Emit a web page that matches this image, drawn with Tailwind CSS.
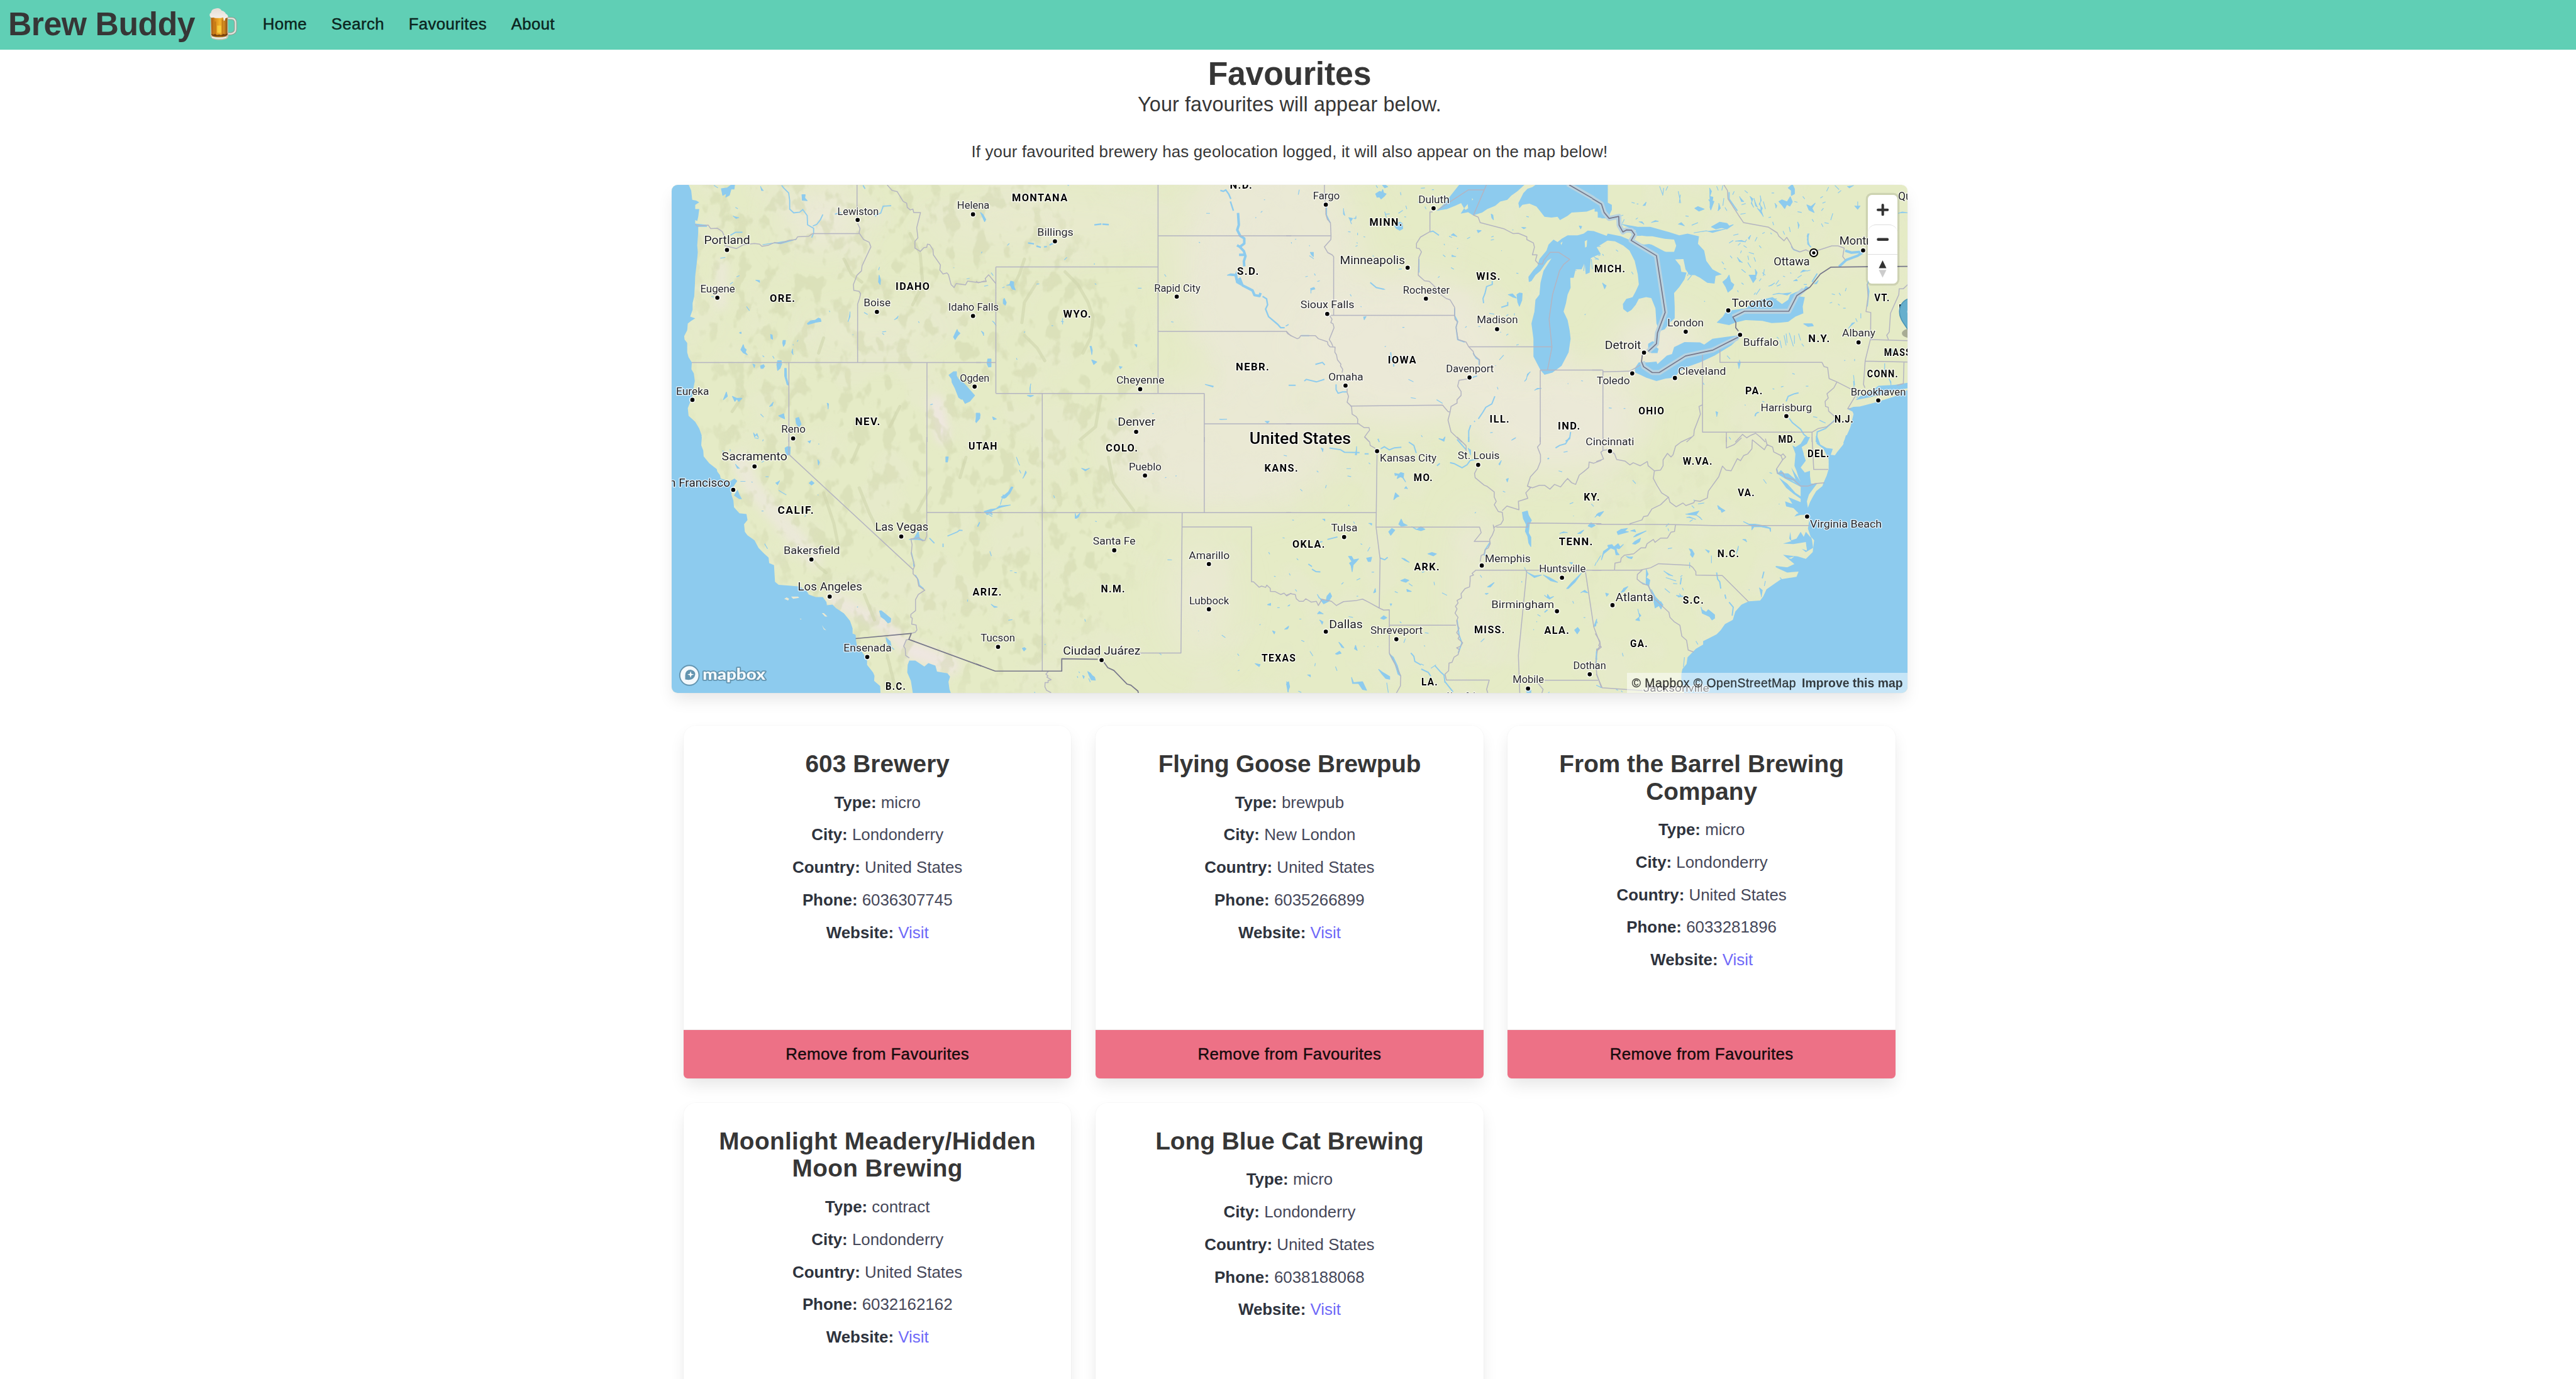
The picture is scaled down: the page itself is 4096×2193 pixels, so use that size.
<!DOCTYPE html>
<html lang="en" class="text-[25.864px]">
<head>
<meta charset="utf-8">
<title>Brew Buddy</title>
<script src="https://cdn.jsdelivr.net/npm/@tailwindcss/browser@4"></script>
</head>
<body class="h-[2193px] w-[4096px] overflow-hidden bg-white font-['Liberation_Sans',Arial,sans-serif] text-[1rem] leading-[1.5] text-[#363636]">
<header class="flex h-[3.0625rem] items-center bg-[#60cfb5] pb-[0.08rem]">
  <div class="flex w-[15.4rem] shrink-0 items-center pl-[0.5rem]">
    <span class="w-[12.36rem] shrink-0 whitespace-nowrap text-[2rem] leading-none font-bold tracking-[-0.45px]">Brew Buddy</span>
    <svg class="h-[1.95rem] w-[1.7rem] shrink-0" viewBox="0 0 54 62">
      <defs><linearGradient id="beer" x1="0" x2="1"><stop offset="0" stop-color="#a65c12"/><stop offset=".25" stop-color="#d98a1b"/><stop offset=".55" stop-color="#f4b32b"/><stop offset=".8" stop-color="#d08a22"/><stop offset="1" stop-color="#8f4f12"/></linearGradient>
      <linearGradient id="foam" x1="0" y1="0" x2="0" y2="1"><stop offset="0" stop-color="#e6ddd6"/><stop offset="1" stop-color="#f7f3ef"/></linearGradient></defs>
      <path d="M36 20h7q8 0 8 9v12q0 8-9 9h-6" fill="none" stroke="#8f9a8c" stroke-width="5.5"/>
      <path d="M36 20h7q8 0 8 9v12q0 8-9 9h-6" fill="none" stroke="#dfe3dc" stroke-width="3"/>
      <path d="M2 14h34l1 40q0 8-17 8T2 54z" fill="#c9c4ae"/>
      <path d="M3 14h32v38q-2 5-16 5T4 52z" fill="url(#beer)"/>
      <path d="M10 26h3v28h-3zM24 22h3v33h-3z" fill="#b06a12" opacity=".55"/>
      <path d="M15 34h8v14h-8z" fill="#ffe14a" opacity=".6"/>
      <path d="M4 52q3 4 15 4t16-4v-3q-3 4-8 1-4 4-8 1-4 3-8-1-4 3-7 0z" fill="#5e2c08" opacity=".75"/>
      <path d="M5 57q14 4 28 0" stroke="#fff" stroke-width="1.5" fill="none"/>
      <path d="M1 16Q-1 11 3 9 4 2 11 1q9-3 13 4 6 1 8 6 5 2 4 7l-5 2-1 4-2 1-1-7q-10 3-20 0-4 2-6-2z" fill="url(#foam)"/>
    </svg>
  </div>
  <nav class="flex items-center tracking-[0.35px] text-[#0b2520] [-webkit-text-stroke:0.45px_#0b2520]">
    <a class="px-3 text-[1rem]">Home</a><a class="px-3 text-[1rem]">Search</a><a class="px-3 text-[1rem]">Favourites</a><a class="px-3 text-[1rem]">About</a>
  </nav>
</header>
<main class="flex flex-col items-center pl-[0.1875rem] text-center">
  <h1 class="mt-[0.33rem] text-[2rem] leading-[1.125] font-bold tracking-[-0.2px]">Favourites</h1>
  <p class="text-[1.25rem] leading-[1.25] tracking-[0.12px]">Your favourites will appear below.</p>
  <p class="mt-[1.37rem] leading-[1.5] tracking-[0.18px]">If your favourited brewery has geolocation logged, it will also appear on the map below!</p>

  <section class="relative mt-[1.3rem] h-[31.25rem] w-[76rem] rounded-[0.375rem] shadow-[0_0.5rem_1rem_-0.125rem_rgba(10,10,10,0.1),0_0_0_1px_rgba(10,10,10,0.02)]">
    <div class="h-full w-full overflow-hidden rounded-[0.375rem]">
    <svg class="block h-full w-full [&_path]:[vector-effect:non-scaling-stroke]" viewBox="1321 364 2432 1000" preserveAspectRatio="none">
      <defs>
        <filter id="soft" x="-30%" y="-30%" width="160%" height="160%"><feGaussianBlur stdDeviation="32"/></filter>
        <filter id="soft2" x="-30%" y="-30%" width="160%" height="160%"><feGaussianBlur stdDeviation="9"/></filter>
        <filter id="relief" x="0" y="0" width="100%" height="100%" color-interpolation-filters="sRGB">
          <feTurbulence type="fractalNoise" baseFrequency=".034 .024" numOctaves="3" seed="8"/>
          <feColorMatrix values="0 0 0 0 .80  0 0 0 0 .825  0 0 0 0 .66  9 0 0 0 -4.9"/>
        </filter>
        <filter id="haze" x="0" y="0" width="100%" height="100%" color-interpolation-filters="sRGB">
          <feTurbulence type="fractalNoise" baseFrequency=".009" numOctaves="3" seed="3"/>
          <feColorMatrix values="0 0 0 0 .922  0 0 0 0 .914  0 0 0 0 .85  0 5 0 0 -2.4"/>
        </filter>
        <mask id="west"><g filter="url(#soft)" fill="#fff"><path d="M1350 340H2020L2140 480 2250 650 2260 900 2230 1100 2080 1350H1700L1500 1100 1400 900z" opacity=".8"/><path d="M3050 1060L3180 960 3400 830 3460 860 3260 1060 3120 1140z" opacity=".25"/></g></mask>
      </defs>
      <rect x="1321" y="364" width="2432" height="1000" fill="#e5ebc6"/>
      <g filter="url(#soft)" fill="#ebe9d7">
        <ellipse cx="2500" cy="530" rx="180" ry="240" opacity=".85"/><ellipse cx="2760" cy="690" rx="210" ry="150"/><ellipse cx="2400" cy="880" rx="230" ry="130" opacity=".8"/>
        <ellipse cx="3060" cy="820" rx="170" ry="110"/><ellipse cx="3260" cy="680" rx="90" ry="60"/><ellipse cx="2060" cy="440" rx="260" ry="60" opacity=".4"/>
        <ellipse cx="2360" cy="1180" rx="70" ry="120" opacity=".6"/><ellipse cx="2895" cy="1150" rx="40" ry="160" opacity=".6"/><ellipse cx="1620" cy="430" rx="80" ry="60"/><ellipse cx="1720" cy="650" rx="140" ry="35" opacity=".6"/>
      </g>
      <g filter="url(#soft2)" fill="none" stroke="#ebe8d9" stroke-linecap="round">
        <path d="M1455 905L1480 960 1540 1030 1600 1100" stroke-width="26"/><path d="M1420 520L1418 600" stroke-width="16"/><path d="M1840 790L1855 860" stroke="#efe6e2" stroke-width="22"/>
        <path d="M1640 1180L1740 1230 1800 1290" stroke="#ede6de" stroke-width="22"/><path d="M1800 1280L1870 1310" stroke="#efe6e2" stroke-width="26"/>
      </g>
      <rect x="1321" y="364" width="2432" height="1000" filter="url(#haze)" opacity=".22"/>
      <g mask="url(#west)"><rect x="1321" y="364" width="2432" height="1000" filter="url(#relief)" opacity=".5"/></g>
      <g fill="none" stroke="#cfd5ad" stroke-width="5" stroke-linecap="round" stroke-linejoin="round" opacity=".6">
        <path d="M2095 535l25 25 20 35 10 30-5 40-15 30M2015 660l25 25 15 25M1990 570l15-30 10-30M2040 555l-25 40-5 40M1620 970l20 60 10 50M1585 1085l25 30 15 12M1690 960l20 50 15 30M1700 1170l20 50M1745 1290l15 60M2180 900l10 50 40 55M2165 780l-10 60-30 25M1460 780l-20 30M1620 665l-10 30M1790 460l20 40 5 60-20 40M1660 510l15 30 20 15M1900 900l-12 40M1830 960l-25 45M1690 875l-15 35M1770 800l-20 40"/>
      </g>

      <!-- Pacific Northwest -->
      <g transform="translate(1310 350) scale(.395408 .333333)">
        <path fill="#8dcbee" d="M20 30L112 40 125 75 130 130 150 135 165 145 145 160 145 185 165 185 160 230 155 255 145 250V270L200 278 205 290 160 290 160 320 155 400 158 440 152 510 145 580 143 640 140 700 132 740 132 780 120 820 145 830 125 845 108 860 105 900 90 935 92 955 105 975 105 1030 112 1060 128 1090 126 1130 138 1155 143 1200 137 1235 133 1265 130 1300 118 1330 108 1360 112 1405 145 1440 165 1480 177 1520 175 1565H20z"/>
        <path fill="#8dcbee" stroke="#8dcbee" stroke-width="1.2" stroke-linejoin="round" d="M238 45l20 15M275 65l30-5 20-18 16 0-3 25-15 0-8 35-18 12 5-25-20 15zM470 50l5 25 10 0M676 100l16 0-2 20 12 15-24-2zM345 175l12 8M333 225l15 15 15-5M703 860l15-15 25-5 15-12 10 5 3 15-25 5-25 8-15 5zM520 925l8 3 2 25-8-5zM582 960l12 0-2 20-8 15-4-20zM372 1015l12-30 5 20 10 10-5 15 10 15-20-12zM555 1080l18 0 2 20-8 25-12 12-4-35zM590 1125l8 0 2 55 10 45-8-5-12-50zM470 1110l15-7 5 10-8 12-10 0zM432 1100l10 5-3 15zM1060 575l7 30-2 25-8-15zM1057 545l5-18M1430 940l8-20 10-24 4 12 10 10-12 15-12 22zM1408 1165l22-20 15 0 0 25 10 20 15 10 20 25 45 60-25 35-22 12-12-25-8 0-12-10-18-55-15-35-2-20zM1075 910l20-3M1075 918l10 8M985 795l18 12M915 790l0 30-10 30M1135 838l15-8 5-15M1430 530l4 2M1495 597l15-3M285 1310l15-45 5 25zM330 1290l12 30 10-15 10 15 15-18-25 0zM515 1350l18-25-5 20zM560 1405l25-12 5 30-15-8zM645 1420l15-5 12 40-12 15-12-20zM470 1395l15 18M800 1330l8 5-2 30M1540 1440l8-50 15 10-8 25zM435 1505l5 25 12-20 8 25M400 760l15 25M445 605l20 2 0 12M350 585l15-7M318 628l15-12M225 700l12 4M365 915l8-4 0 9zM480 1050l8 8M630 1010l-5 20 8 15M530 1052l8 15M630 985l5 2M652 968l5-10M812 785l3 8M928 925l3 3M1315 1340l12-4M1255 848l5 8M270 475l25-5M480 395l60-10 30 5 80-28"/>
        <path fill="none" stroke="#8dcbee" stroke-width="1.8" d="M575 45l10 15 25 30 5 45 0 50 20 22 30-4 15-15 22 35 2 55 30 20 0 30-10 25M730 285l20-10 18-28 12-30M1040 228l8-10 20-10 12-40 40-3M840 215l30-10M980 45l10 20M320 340l25-18 35 0"/>
        <path fill="none" stroke="#b4b4c1" stroke-width="1.5" stroke-linejoin="round" d="M950 40V240M953 270L965 300 960 325 983 365 1010 380 1019 408 975 520 972 550 950 575 932 630 934 665 960 670 968 685 962 715 953 745V1092M728 330H965M145 275L155 285 210 280 222 300 255 298 280 318 290 345M290 400L350 418 385 395 440 388 465 392 477 405 510 398 540 382 565 388 610 370 645 365 655 348 710 345 728 330M128 1091H1568M611 1092V1560M1298 1092V1560M1100 42L1125 75 1150 82 1180 140 1197 150 1200 175 1215 190 1228 185 1232 205 1266 205 1247 295 1253 355 1238 375 1238 415 1265 435 1283 412 1297 410 1300 392 1312 395 1328 425 1330 455 1365 515 1362 545 1378 568 1397 562 1405 572 1418 630 1433 648 1443 625 1490 632 1500 610 1550 618 1594 612"/>
      </g>

      <!-- California and Arizona -->
      <g transform="translate(1310 860) scale(.395408 .333333)">
        <path fill="#8dcbee" d="M177 0L175 50 185 80 187 115 215 155 252 190 255 205 268 225 272 245 300 255 325 262 330 300 325 340 335 375 338 415 365 450 400 455 405 490 388 515 392 560 405 580 440 610 460 655 485 685 510 712 513 745 537 757 542 855 560 873 620 878 665 883 700 910 710 930 745 945 780 945 798 975 800 993 828 990 845 1010 885 1042 915 1085 928 1130 928 1160 943 1168 945 1200 950 1235 975 1270 1000 1310 1000 1345 1030 1390 1037 1410 1035 1440 1065 1470 1067 1515H20V0zM1210 1320L1240 1320 1285 1355 1305 1335 1340 1350 1348 1385 1400 1395 1413 1415 1405 1445 1410 1490 1418 1515H1228L1218 1440 1200 1390 1202 1345z"/>
        <path fill="#ebe9d2" d="M588 955l12-8 12 8-5 10zM622 942l35 0 5 8-30 5zM775 1040l10 0 18 20-12 0zM775 1110l10 18 12 14-12-6zM665 1072l10 2-6 4z"/>
        <path fill="#8dcbee" stroke="#8dcbee" stroke-width="1.2" stroke-linejoin="round" d="M325 258l15-10 12 12-12 20-10 20zM340 345l15-30 8 25 12 25-10 0zM592 65l12-8 14 2-2 45-14 2-8-20zM1062 1028l8-2 20 18 28 28-2 20-12 6-15-20-20-18zM1095 1185l20 22 5 30-12-5-10-25zM712 272l12-12 12 12-12 12zM755 135l8 15-5 15zM1392 118l12 0-4 30-8 0zM545 270l10 12 10-25M560 315l20 15 18 12M345 160l10 25 12 0M370 262l25 0M425 265l5 3M495 235l15 0M475 437l10 0M490 630l15 30M1210 605l25-8 20-40 5 40 25 15-40-8zM1500 960l0 12M1120 1240l15 15M280 80l10 10M318 72l2 12M475 150l12-8M705 25l10 10 5-15M757 42l5 0M950 1005l5-3M690 470l5-8M755 340l2 5M440 5l20 5M480 25l4-10"/>
        <path fill="none" stroke="#8dcbee" stroke-width="1.8" d="M1400 585l50-25 10-10 15 2M1310 597l25 30M1378 630l0 20M1220 680l12 60 0 25M1550 530l10-25M1240 815l15 30 5 30 22 22"/>
        <path fill="none" stroke="#b4b4c1" stroke-width="1.5" stroke-linejoin="round" d="M611 0V103L1229 783M1297 0V585L1288 610 1275 613 1260 595 1218 602 1224 635 1220 690 1237 760 1229 783V808L1250 835 1257 880 1287 905 1255 930 1241 960V1025L1218 1047 1218 1065 1225 1070 1222 1105 1244 1110 1248 1140 1240 1153 1218 1160M1297 446H1568M1208 1195L1195 1198 1182 1235 1190 1250 1192 1290 1210 1305"/>
        <path fill="none" stroke="#77778a" stroke-width="1.7" stroke-linejoin="round" d="M943 1190L1220 1160 1208 1195 1568 1352"/>
      </g>

      <!-- Northern Rockies and Dakotas -->
      <g transform="translate(1920 350) scale(.395408 .333333)">
        <path fill="#8dcbee" stroke="#8dcbee" stroke-width="1.2" stroke-linejoin="round" d="M152 635l15-5 5-20 15 5 0 25 8 22-15-5-10-22zM135 720l5-8 10 25-5 15-10-10zM22 205l12 12 14 30-6 12zM58 1070l16 0 0 45-12 2-8-20zM0 1390l18 0 0 30-18 25zM82 1412l18 12-14 4zM565 995l8 0 5 25-3 25M575 1075l25 12-15 15zM272 1215l-5 30 3 30M255 1285l30 0-15 8zM1250 575l15-8 25 2 5-15 5 40 10 15 12 10-5 15-22-15-8-40zM1140 1220l40 10-2 5zM1438 1438l20 0-8 10zM1210 1425l8 2 30-2M712 1112l5 15 10-12M430 830l0 35M422 848l14 2M788 985l12 0-2 15M805 652l18 0M937 570l8 14M1108 380l6 4M1145 210l18 0M1416 205l8-8M1390 238l3-5M75 560l10 18M40 640l20-5M25 905l12 10 0 18M80 845l10 10 10 20M238 915l5-8M200 1065l4 10M375 872l8 2M588 505l0 8M438 485l14-15M590 625l8 5M155 400l10-12M25 445l5-8M300 628l14-2M130 650l12-6M1432 130l5 0M970 850l12 2M876 1392l8 0M455 42l6 5M1540 875l14-10M693 1420l6 10"/>
        <path fill="none" stroke="#8dcbee" stroke-width="4" stroke-linejoin="round" d="M1303 208l4 70-8 30 15 35 20 15 0 30-22 20 20 25 8 30-8 30 2 30M1308 455h28M1298 398l14 10M1310 590l15 45 50 30 10 28 25 5 5-18"/>
        <path fill="none" stroke="#8dcbee" stroke-width="2.4" d="M1215 75l15 5 12-8 15 25 10 28M1265 140l15 55M588 278l35-5M628 274l32 3M258 385l30 5M300 403l22 8M338 408l14-2M365 397l18-10M1425 700l20 15 5 35-10 25 15 45 45 45 15 20 20 0"/>
        <path fill="none" stroke="#b4b4c1" stroke-width="1.5" stroke-linejoin="round" d="M0 610L10 620 40 610 50 612 45 595 62 573 98 625M98 526H903M98 526V1272M98 1273H1135M905 42V1272M905 343H1568M905 907H1543L1550 920 1568 932M0 1091H100M329 1272V1560M1135 1272V1560M1135 1452H1568"/>
      </g>

      <!-- Southwest and Texas -->
      <g transform="translate(1920 860) scale(.395408 .333333)">
        <path fill="#8dcbee" stroke="#8dcbee" stroke-width="1.2" stroke-linejoin="round" d="M40 440l30-12 30-5 15-15 55-6-45 12-25 10-25 15 5 20-15-10-10 10zM125 355l20-15 15-15 15-30 8 2-15 35-20 25-10 5zM525 185l20 8 18-8-20 15zM493 480l0-28 4 20 20-22-8 22-10 8zM75 988l12 10 18 6-15 2zM230 1248l10-5 8 8-10 12zM555 1385l12 8 10 15 12 10 4 18-20-2-10-25zM560 1425l8 22M530 1408l8 5-3 12zM503 1412l3 10M510 1385l6 8M1388 1338l25 5-5 12zM1450 990l15-8 0 12zM1475 1145l12 5-4 12zM1535 1135l20-18-5 15zM1545 1445l8 10 0 50-5-40zM385 345l6 15M952 725l22 1M540 1075l4 15M592 497l8 3M200 118l12 40 5 10M215 195l8 20M245 200l5 10-18 35M1525 595l10 2M1455 680l6 12M1482 822l8 2M1550 1000l12-10M1498 1008l12 0M1415 1105l-5 5M1222 1170l18 14M1105 1143l3 3M1300 1280l8 12M1302 1380l8-4M340 1225l6 0M160 1082l20-4M168 790l12 0M190 800l12 2M68 675l8 28M8 525l10-22M60 455l20 15M910 1275l12 12M120 400l15-60M940 242l6-4M992 231l5-2M1530 108l16 4M290 1505l3 8"/>
        <path fill="none" stroke="#b4b4c1" stroke-width="1.5" stroke-linejoin="round" d="M329 0V1382M0 447H1568M1135 0V446M1025 446L1019 1275H640M1025 531H1370V855L1380 855 1408 887 1420 880 1440 888 1446 875 1463 893 1464 912 1488 913 1515 930 1532 922 1545 938 1568 922M360 1382L347 1400 357 1410 352 1418 373 1433 358 1438 358 1450 343 1450 342 1475 350 1495 373 1510M607 1300V1285"/>
        <path fill="none" stroke="#77778a" stroke-width="1.7" stroke-linejoin="round" d="M0 1340L95 1382H426V1309L605 1312M636 1330L655 1362 685 1378 750 1458 770 1465 805 1500 807 1512"/>
      </g>

      <!-- Upper Midwest -->
      <g transform="translate(2530 350) scale(.395408 .333333)">
        <path fill="#8dcbee" d="M748 195L790 150 815 110 860 42H1185L1150 80 1120 105 1100 130 1065 140 1040 165 1000 185 975 205 930 222 905 203 868 212 885 180 870 150 840 165 800 185zM1240 42H1600V240L1550 235 1550 185 1535 182 1495 200 1420 205 1400 225 1362 250 1350 230 1320 235 1285 230 1265 200 1245 170 1210 152 1175 160 1160 180 1155 150 1180 90 1200 65 1225 55zM1500 312L1530 315 1600 345V370L1545 410 1565 450 1530 465 1515 475 1510 560 1490 570 1485 500 1470 540 1440 540 1430 590 1413 590 1415 650 1400 690 1392 740 1380 790 1400 840 1410 900 1415 950 1405 1030 1370 1110 1325 1150 1285 1163 1265 1135 1230 1055 1230 950 1220 860 1235 790 1240 720 1260 690 1265 620 1280 550 1320 475 1300 490 1265 550 1240 575 1220 610 1207 615 1205 585 1230 545 1250 520 1260 480 1295 430 1305 395 1330 365 1350 380 1370 360 1400 340 1450 340 1480 330z"/>
        <path fill="#e5ebc6" d="M885 180l18-25 2 25-12 10zM1485 375l12-8-2 40-8 5zM1365 385l10-8-6 20zM925 120l5 8-6 6z"/>
        <path fill="#8dcbee" stroke="#8dcbee" stroke-width="1.2" stroke-linejoin="round" d="M445 95l20-15 10 5 5-15 5 20 12 5-10 15-15 15-8-12-12 2zM540 285l12-18 15-5 10 8 3 30-15 10-18-12zM1148 690l12-10 14 3-2 40-12 35-8-25zM1105 690l20-5 20 25-15-5zM1020 215l8 5 3 28-8-12zM950 310l20 2-15 12zM1195 228l12 4M1172 293l20 2-10 6zM1458 285l12 2-5 14zM480 45l15 0 10 8-15 6zM447 45l8 15M65 70l-5 30M310 235l20 5-10 18 5 15M285 180l0 35 8 8M335 240l15-3M348 225l-5 20M308 318l12 2M355 325l0 14M385 348l8 2M345 405l10-5M350 382l5 5M490 200l8 35M495 215l20-2M558 210l22-18M595 165l5 20M655 142l8 4M568 85l3 18M670 62l20-2M725 70l10 0M690 170l6 15M588 230l8 2M120 440l15 0 0 25-10-12zM115 460l22 18M95 585l12-4M140 565l5 12M155 612l12-4M120 655l18-8 5 10-20 5 0 20M318 688l6 12M430 460l6 4M480 655l12 5M820 340l12-10 18 18M810 345l15 8M785 390l3 8M900 360l15-10M1020 350l12-5M1018 368l16-4M780 455l12 12M825 455l0 10 20 0M820 530l14 10M755 590l8-8M1070 430l3 0M850 420l5-5M1145 563l10 2M1125 310l5-4M1095 930l10-8M1065 912l4 0M1145 988l12-4M890 885l8-8M1040 1108l4 2M1010 800l25 5M1095 815l10-8M1135 800l0 12M955 878l12 0M620 1298l25 5M608 1190l25 15M748 1310l30 22M578 883l10 0M490 998l6-4M385 820l3 18 10-20M370 760l5 2M115 398l2 6M45 365l4-4M25 380l2 8M0 875l12-8M1485 810l4-6M1235 1255l15-12 20 0M1050 1235l4 14M1215 1145l-15 15-5 30-10 12M1060 1075l22-28M1468 1198l8 2M1400 1215l4 0M1530 465l25 20M1535 480l18-3M1518 480l5 60M1505 480l-5 80M1480 550l5-50M1440 545l4 3M1455 530l15 2M760 1540l20 5 10-15-5 25zM458 1540l5 20M1015 1505l12-2M672 1520l5 10M1125 1545l18-12M560 540l15-2"/>
        <path fill="none" stroke="#8dcbee" stroke-width="2" d="M418 618l30 30 38 10M1025 610l0 20-28 12-8 40-10 30 3 28M1070 765l32-12 0-20M1038 1290l-15 45-30 20-15 30-22 38M935 1435l4 6M918 1460l-10 35 0 65M75 932h40M90 1200l10-10 50 15 40-15M145 1102l35-12 12 15M12 1225h35M248 1220l0 30 10 22 22-8 20 0M715 320l15-5 30 25M910 1185l40-15M520 1030l2 50M535 1100l0 15M1415 1500l-5 40-20 15M200 160l0 60 18 45M660 480l0 80M838 770l0 45 15 35-8 30 8 75 35 15M930 1035l15 30 15 10 0 30"/>
        <path fill="none" stroke="#b4b4c1" stroke-width="1.5" stroke-linejoin="round" d="M190 42V100L197 170 197 215 205 245 220 265 223 345 222 365 190 408 207 442 228 455 236 465V810M0 343H222M222 812H838M215 812L228 835 222 855 233 862 238 885 214 955 225 975 232 995M0 905L20 930 55 950 65 945 72 932H145L160 950 205 968 208 985 218 998 243 1000 242 1030 250 1045 255 1075 272 1100 270 1110 281 1130 278 1150M303 1245V1268L310 1290 303 1325 325 1350 328 1395 348 1410 356 1425 355 1448 388 1475 412 1475 415 1490 405 1505 390 1530 415 1560M318 1348L778 1342 805 1380 815 1383M0 1452H365M728 202H715V318L668 350 648 388V415L662 418 673 438 660 470 657 575 688 608 712 612 735 638 770 690 795 712 815 720 838 765V812L840 835 852 850 845 885 855 955 895 970 908 998 930 1025 935 1048 962 1075V1105M912 1185L860 1195 853 1230 870 1262V1285L850 1310V1330L820 1350 815 1385 805 1430 820 1500 873 1560M908 998H1322M1264 1135V1560M1264 1135H1568M755 188L905 72H985L996 42M985 72L932 220 955 232 965 265 1085 302 1130 330 1155 328 1197 348V365L1230 385 1235 410 1225 455 1248 455 1240 488 1255 508 1275 510 1282 485 1313 440H1355L1411 482 1380 512 1360 548 1325 690 1308 835 1322 1000 1300 1135"/>
        <path fill="none" stroke="#b9d3e0" stroke-width="8" d="M1400 36L1568 150"/>
        <path fill="none" stroke="#77778a" stroke-width="1.7" d="M1408 42L1568 152"/>
      </g>

      <!-- Mississippi basin and the South -->
      <g transform="translate(2530 860) scale(.395408 .333333)">
        <path fill="#8dcbee" stroke="#8dcbee" stroke-width="1.2" stroke-linejoin="round" d="M540 215l20 5 10-10 15 5-3 25 12 25-15-25-12-5-15 10 5-20-15 2zM535 370l8-40 18 20-12 5zM588 305l8-12 8 14M560 515l12-30 10 25 20 12-30 5zM625 530l25 15 20-15 20 15-20 8-25-8zM510 560l15-20 15 10-20 30zM310 705l15 0 10 20 25-5-15 20-12 15-5 40-5-35-8-15 12-10zM400 715l25-5-5 25-12 0zM705 690l20-8 22 8-15 12zM570 848l20-10 20 8-15 12zM610 865l18 15M575 715l15 5 22 20-20-10zM600 900l22 12-20 0zM775 920l25 15M735 855l3 20M1002 885l32-25-18 25zM990 925l15-2-8 6zM1175 445l25-8 5 25 15 30-10 20-5 55 12 25 0 55-10-20-5-40-12-30 5-40-15-35zM1360 570l20-10 20 5M1450 570l30-20-15 20zM1502 525l15-18 20 15-18 12zM1535 475l18-25 15 0M1545 740l20-40M1535 760l8-20M1285 935l15 15 0-20 12 20 18-8-20 15zM1410 740l10 10 5-10M1395 895l25-35 48-55-30 50-35 40zM1200 800l35 30 35-15-35 5zM1280 815l30 15 40 28-35-10zM1185 770l12 30M1465 920l20-15 15 15-20-5M1425 968l5 15M1250 1048l15 10M1435 1140l15-15 10 15-12 22zM1480 1065l8 2M1530 1120l15-45-5 40zM1545 1250l-5 60 3 30 0-50zM1245 1088l3 5M1230 1135l2 5M968 1210l18-20M965 815l8 15M1172 850l0 10M1195 1495l22 0 0 18-18 0zM513 1280l20 20 20 50 15 60-12-10-15-60-15-30zM460 1372l20 18 35 25 0 15-20-5-18-25zM325 1420l10 30 45-5 20 50-20-5-20-35-30 0zM262 1212l10 10 15 22-10-2zM340 1250l5-20 8 30zM245 1280l20-15 8 12-20 6zM118 1265l15 28M105 1405l15 0 0 12M245 1355l8 25M145 1335l-3 18M0 1460l12-15 5 30-10 30M155 1045l10-15 20 15M165 1080l18 12-5 15M310 1060l22 5M470 1070l15-15 15 12-15 10zM350 940l8 0M155 930l8 20 35 20 5-30 15-20 8 20-15 30-25 15-15-25zM435 920l8-25 2 20zM275 870l10-12M350 845l18-10M180 485l12 0 0 12M410 510l15 0 0 12M335 500l5 12M405 675l12-25M370 630l8 5M310 400l3 8M70 308l10 12M195 302l5-18M152 200l8 8M300 187l22 0M305 230l18 5M172 65l12 5-3 18M350 55l0 50-8 0M410 152l8 8M1058 160l12-20-8 25zM1095 250l10-5-5 20zM1078 320l12 6M938 450l6-6M515 985l10 0-5 12M540 912l15 8M585 1215l8-25M685 1232l6 3M455 1235l2 5M720 1365l25-20M690 1155l18 4M1410 395l18-8M1518 395l12 15M1428 465l3 2M1355 200l18 6M1380 90l20-5M760 10l20 10M455 12l8 18M1120 20l20-12M905 65l12 40 0-30M45 900l8 12M52 718l8 8M15 805l5 12M30 490l8 2M10 995l8 0M65 1075l10 0M0 1135l12-12M385 1235l6 0M75 1200l15 8M500 1450l8 60M670 1340l15 8M675 800l12-5M425 798l12 0M60 1500l15 8M1310 1505l-8 8M565 1090l8 8"/>
        <path fill="none" stroke="#8dcbee" stroke-width="2" d="M470 70l18-12 25 18 25-12 35-3M610 30l25 20 12 45M815 152l20 5 40 25 25-18 15-25 40-10M908 0l0 28M215 65l55 10 20 15 75 2M110 750l18 15M128 780l20 15 22 2M205 605l50-15M155 625l25-8M468 715l22 10 15-15M620 1275l15 20 5 30 30 20M672 1370l35 20 12 22M740 1350l30 40 15 15 5 45M790 1445l40 60M390 100h20M1285 1035l15-15M1340 65l20-15 30-10 18-35M1300 130l8-5M750 170l14-14M850 15l45 60M1015 620l-25 45-5 35M850 1080l10 90 14 45-18 60"/>
        <path fill="none" stroke="#b4b4c1" stroke-width="1.5" stroke-linejoin="round" d="M390 0L415 30 418 50 440 65 452 85 447 532 467 720 463 1010M850 0L895 52V85M950 185L937 215 940 240 985 285 1000 292 1035 325V355L1045 380 1035 400 1055 440 1075 445 1080 490 1068 515 1045 525 1035 535 1030 520 1035 550 1025 580 1012 605 1015 630 1005 655 990 665 985 690 970 700 965 735M945 785L925 805 932 815 915 822 915 850 912 885 890 895 880 910 870 925 872 950 850 965 855 980 842 1000 850 1015 840 1040 855 1065 848 1085 852 1110 860 1130 848 1155 862 1175 855 1190 878 1215 868 1235 848 1245 862 1255 855 1285 835 1300 825 1330 810 1335 808 1380 790 1400 797 1435H1010L997 1490 1003 1512M0 447H447M447 532H962L970 565 935 617H1012M1045 532H1202V508L1568 512M945 786H1568M0 935L20 925 45 930 50 955 65 970 85 970 97 955 125 975 150 970 160 995 178 958 225 970 250 995 285 972 350 965 380 957 410 975 463 1010 485 1022 513 1020V1275L545 1350 570 1410 568 1470 548 1512M513 1111H845M1197 790L1155 1290 1162 1512M1488 790L1530 1120 1560 1215 1555 1232 1568 1240 1548 1260 1540 1330 1545 1400 1568 1480M1285 1436H1552M1250 1450L1278 1490 1272 1512M1264 0V40L1250 60 1265 105 1265 145 1250 190 1215 235 1200 290 1215 300 1192 330 1202 362 1155 380 1158 430 1098 408 1075 435M1200 290L1225 300 1260 285 1285 285 1312 308 1335 280 1365 295 1385 265 1400 245 1420 270 1440 280 1458 225 1480 205 1505 180 1507 148 1530 155 1568 138"/>
      </g>

      <!-- Great Lakes and Northeast -->
      <g transform="translate(3140 350) scale(.408163 .333333)">
        <path fill="#8dcbee" d="M-8 42H40L55 70 42 95 45 140 75 160 75 190 65 215 65 240 25 240 5 200-8 200zM-8 325L45 355 55 330 120 345 170 372 230 395 260 390 330 435 370 425 385 400 375 365 330 360 270 345 220 345 180 340 190 310 110 270 200 290 260 290 350 320 400 340 440 330 495 345 490 390 520 430 530 490 560 540 605 570 575 580 570 625 535 620 500 590 475 575 450 575 430 540 425 510 420 480 380 482 405 520 410 555 435 560 425 600 400 645 375 680 378 760 378 830 350 860 330 895 305 905 290 860 285 770 265 710 240 705 205 715 190 750 170 780 150 795 130 775 128 745 145 715 175 705 190 670 205 630 200 570 185 490 160 430 130 400 90 375 45 370 30 385-8 360zM250 980L270 965 285 970 280 990 300 1010 295 1035 265 1035 250 1010zM205 1090L250 1090 290 1085 295 1100 340 1050 365 1040 375 1000 425 970 500 972 520 985 560 950 620 940 685 930 690 945 650 990 610 1020 570 1050 500 1090 430 1120 395 1150 380 1180 335 1185 290 1200 240 1180 215 1165 188 1150 185 1125zM580 855L610 820 625 790 665 780 720 770 760 730 850 705 895 745 925 720 935 690 1000 655 1010 640 1030 650 985 685 975 700 1005 705 995 760 998 800 960 820 925 850 890 855 845 858 800 845 720 840 670 855 640 870 620 865zM1510 1208L1440 1222 1360 1228 1320 1265 1270 1290 1250 1312 1300 1300 1400 1275 1430 1258 1510 1240zM1510 1250L1460 1270 1440 1290 1390 1310 1340 1328 1270 1350 1240 1352 1210 1365 1235 1380 1240 1395 1225 1470 1215 1500 1190 1565H1510z"/>
        <path fill="#e5ebc6" d="M195 345l25-3 50 10 60 10 40 10 15 30-10 35-40 0-40-35-45-12-35 0-20-20zM150 315l25 3 3 20-20-5z"/>
        <path fill="#8dcbee" stroke="#8dcbee" stroke-width="1.2" stroke-linejoin="round" d="M570 280l25-18 35 8 10 15 20-8-30 25-25-8-30 8-20-12zM610 615l20-20 10-20 8 40 15 15-8 25-20 20-10-30zM1000 862l40 0 6 12-25 4zM475 180l15-10 30 15-25 12zM1015 160l20 10 20-20-15 30 10 25-25-15zM880 140l15-10 25 12 15-30 10 30-12 25-15-10-10 25-12-20zM925 60l15 15 0 30 15-10 0-30-10-25zM305 50l15 50M325 60l-5 45M345 50l-10 25M395 80l12 70M405 100l-5 50M545 60l10 20-8 30 15 5-5 40-15-25 25 10-15 50-5-20M580 50l8 25M610 45l-5 30M590 150l8 30-12 15M615 120l-5 45M620 175l10 20M225 165l15-20-5 20M170 145l15 5M195 155l8 0M120 225l10-5M190 245l10-8M135 245l-10 25M205 260l15 0 10 15M265 265l20-12 15 5M395 275l15-10 15 20M460 280l30-15M470 325l60-12 30 10 65-22M430 225l15 3M665 80l-8 20M715 75l15 15M690 110l10 30 12 0M740 110l15 15-8 25 12 25M760 120l8 45 10 10M790 105l5 30-10 20 15 25-8 25M805 140l10 45M775 180l20 15 10 35M695 215l25-5M700 160l20-8M845 90l12 0M860 150l10 15-5 15M830 235l12-3M850 260l5 20M955 140l15 5M995 110l10 15M970 200l20 5M1080 120l12-10M1090 150l15-8M1085 195l10-15M1120 55l-10 25M1150 45l20 25M1210 50l10 10 20-15M1180 75l-15 15M1245 165l15 20 12-20M1260 140l0 40M1140 210l-10 40M1100 265l20 5M1085 270l8 20M1040 245l8 15M970 260l8 20-5 20M930 290l5 30M1015 345l10-15-8 35 10 30M900 315l8 20M840 325l6 8M745 340l-12 15 5 10M775 350l-10 25M725 365l-8 12M800 330l12-8M660 340l25-8M640 385l20-15M710 400l15 12M785 400l10 15M700 430l-5 15M670 375l30-5 20 10M695 385l-12 15M735 440l25 10M760 470l8 25M645 460l10 15M605 495l10 15M615 535l10 5M680 470l10 25 15 5M730 500l15 30M730 460l5 25M700 540l20 20M735 575l30 0 5 20-15 25M765 540l10 20-8 30M785 610l10-15M800 560l15 15M810 540l-5 40M830 640l15-5 15-15M790 655l-20 35M760 690l8-12M680 665l5 10M700 620l10 10M880 605l-15 25M870 640l18-10M900 580l10 5M985 560l12-15 20 5 15-5M970 590l20-15M950 610l15-10 5 10M935 560l5 5M1050 625l12 0 8-20M1000 630l15 0M30 620l10 35 8-20M170 555l8 15M95 425l10 10M5 405l15 0M10 460l10-5M30 450l5 10M520 728l4 4M1205 650l-5 20M1135 685l15 5M1170 680l8 15M1125 740l12-5M1165 745l8 8M1190 770l12 0M1275 800l0 30M1250 830l8 20M1230 860l15-5-20 20-10 15M1455 210l20-8 25 5M1310 540l5 60-8 30 8 40-8 90M905 930l10 60M915 920l5 55M930 915l20 80M955 930l0 50M975 920l10 40M870 940l10 10M885 960l8 45M990 980l10 15M630 1050l15 20M680 1090l15-3-8 40M690 1075l3 30M1245 1070l0 12M1195 1080l5-3M60 1358l14 2M132 1362l8 0M575 1380l10 5-5 25M800 1320l10 3M850 1245l8 3M890 1235l12-4M765 1400l10-15 10 0M715 1340l5 3M1045 1410l20 5M1075 1430l15 10 15 8M1010 1230l12 0M945 1155l12 5M555 1135l5 5M515 1210l5 12M1425 1010l3 25M1390 1095l0 40-5 30M1410 1185l10 20 0 20M1240 1165l5 60M1280 1260l-25 40M1240 1280l15 0M1240 1200l3 50M445 560l-5 20M460 575l-20 30M850 690l30-8 40 10 20-15M840 715l30 0"/>
        <path fill="none" stroke="#8dcbee" stroke-width="4" stroke-linejoin="round" d="M1170 525l35-40 55-25 25-20M1200 430l30 12 45-5"/>
        <path fill="none" stroke="#8dcbee" stroke-width="2" d="M915 1320l10-30 30-15 20-5M770 1390l-5 18M930 1420l15 25 40 40 15 30 20 20M640 85l0 40 40 70M940 405l12 20 28 12M1065 565l-25 50M1020 330l0 60 15 20M1060 1560l5-60 40-20 45-50"/>
        <path fill="none" stroke="#b4b4c1" stroke-width="1.5" stroke-linejoin="round" d="M615 42L632 75 635 125 685 220 710 265 830 292 872 325 880 345 905 372 918 352 935 385 948 420 980 438 1010 425 1025 435M1065 430L1135 402 1165 402 1195 415 1188 465 1200 485M596 1000V1090H1088L1098 1115 1115 1120 1122 1185 1160 1205 1240 1255 1248 1290 1212 1363 1228 1363M1160 1205L1145 1240 1112 1275 1118 1300 1103 1320 1105 1350 1118 1355 1120 1378 1150 1410M1148 1435L1110 1470 1070 1480 1040 1502H512V1030M32 1135V1560M-20 1135H32M32 1145L160 1142 220 1100M512 1340L495 1350 502 1395 472 1490 470 1520 435 1560M627 1502V1560M1040 1502V1560M1305 625L1310 700 1300 790 1323 795 1322 950 1296 1080 1288 1220 1295 1240M1322 955L1502 962M1296 1082L1502 1088M1483 1090L1480 1215 1450 1225M1502 630L1480 655 1460 655 1458 690 1418 800 1412 910 1400 930 1408 955M670 1560L705 1515 725 1535 745 1520 768 1508 790 1530 815 1560"/>
        <path fill="none" stroke="#b9d3e0" stroke-width="8" stroke-linejoin="round" d="M-20 120L25 155 38 205 62 240 108 228 110 280 128 320 145 308 170 310 185 335 168 370 290 460 332 795 295 915 290 980 250 1025M222 1085L228 1115 270 1150H303L430 1052 560 1018 680 945M658 822L714 788H928L967 695 1000 660"/>
        <path fill="none" stroke="#77778a" stroke-width="1.7" stroke-linejoin="round" d="M-20 122L25 155 38 205 62 240 108 228 110 280 128 320 145 308 170 310 185 335 168 370 290 460 332 795 295 915 290 980 250 1025M222 1045L218 1085 228 1115 270 1150H303L430 1052 560 1018 685 940M685 905L672 885 673 855 658 822 714 788H928L967 695 1030 645 1080 568 1130 528 1310 525 1502 523"/>
      </g>

      <!-- Atlantic coast -->
      <g transform="translate(3140 860) scale(.408163 .333333)">
        <path fill="#8dcbee" d="M1203-10L1190 45 1160 90 1150 108 1130 105 1140 70 1110 65 1080 45 1065-5H1058L1062 40 1095 70 1120 130 1120 190 1110 230 1095 270 1090 290 1060 320 1045 350 1030 385 1020 418 1015 380 1025 340 1055 290 1065 275 1035 275 1030 230 1030 200 1005 210 985 180 1010 140 1000 100 990 60 1015 40 1030 0H1005L985 40 960 60 945 50 960 100 955 170 965 200 975 240 985 265 940 180 960 250 925 215 905 215 890 195 875 215 910 245 950 260 985 295 985 350 960 330 920 275 880 240 915 300 950 335 985 365 985 385 925 355 945 395 910 380 915 410 950 420 975 450 965 455 955 470 985 460 1015 460 1028 480 1020 540 1035 595 1010 560 1000 590 985 560 965 600 940 610 935 560 908 535 935 560 930 600 940 615 900 630 950 632 1010 620 1015 670 975 645 1010 680 1045 655 1040 610 1022 530 1035 590 1050 610 1043 680 1010 720 970 705 900 695 935 730 955 750 920 770 865 770 920 800 975 795 965 825 890 840 860 865 820 900 805 940 790 965 735 970 700 990 670 1030 658 1080 620 1105 600 1140 580 1165 540 1190 515 1205 515 1225 480 1250 460 1275 440 1300 435 1340 415 1370 410 1400 410 1440 425 1512H1510V-10z"/>
        <path fill="#e5ebc6" d="M1000 65l20-25 20 10 5 145-20 5-25-20 10-40-10-35zM1032 200h80l-15 65-60 8zM940 655l30-20 40 0 5 35-25-10-25 10zM925 715l30-10-15 15z"/>
        <path fill="#8dcbee" stroke="#8dcbee" stroke-width="1.2" stroke-linejoin="round" d="M100 560l20-15 30-5-15 15 20 5-25 8-25 8zM165 555l20-8 5 15M180 590l15-15 45-20-30 20-20 12zM175 630l10-12 28-20-5 20-20 15zM55 640l20-5 10 15 20-20 10 20 15-15-20 25-15-5 5 25 10 15-15 0-5-30-20-10-35 35-10 35 10-50 25-20zM145 705l15 5 15-2-5 10-15-4zM345 660l20-5M448 660l12 5 12 25-8 20-10-15 3-15zM525 665l20 8-5 12M555 700l0 45M675 690l10-45-3 25M585 405l15 15 20 15-15 10-5-15-10-5zM470 370l5 12M435 475l15-3 30 15M430 455l20 3 30 3 15-25M480 460l20 15 10 15M450 500l15-12M460 405l12 15M490 395l30-5M335 530l15-20M345 540l5 15M710 500l25 15 30 0 40 8 35 15 0 20-5-18-40-10-35 0-10 18 0-22zM705 605l15 0 5 15M240 780l10 30-10 20 18 15-5 35-15-10M210 855l25 12M325 790l25 25 20 5M335 830l50 20M405 825l10-8M370 865l20 2M330 895l25 25M415 890l5 15M385 935l35 5-25 5M400 925l15 20M505 1005l5 15 20 15 10-15 30 30 0 20-12 10-12-20-35-20zM200 1015l5 25 10 15-25 25 20 5M130 895l22-12-20 30-15 5M45 920l5 20 10-15M265 900l20 45 35 45-8 25-10-20-20 15M310 970l10 20M175 255l15 20M835 210l12 5M805 250l15 25M880 395l3 3M125 1275l5 20M640 0l8 15M0 460l15-12 20-8-20 30M0 1080l5 20M0 1265l3 50M95 1490l10 5M120 1498l6 8M735 900l3 5M785 890l15 15-5 40M0 1465l25 15M480 1205l10 20M425 1300l-5 60M815 850l-5 30M885 830l8 10M450 740l0 35"/>
        <path fill="none" stroke="#8dcbee" stroke-width="2" d="M580 800l5 40 10 15 5 40M620 930l5 25M640 975l20 30-5 50M800 835l8-40M405 870l5-40M250 875l22 60 20 25 30 35M865 765l55 8M870 190l5 25 40 30 70 45"/>
        <path fill="none" stroke="#b4b4c1" stroke-width="1.5" stroke-linejoin="round" d="M1040 0L1048 192H1118M0 515L380 517 560 523H1028M160 513L220 490 228 470 248 465 268 425 310 400 348 355 315 330 292 285 275 245 280 200 250 170 246 145 212 170 178 152 162 165 138 142 98 133 88 100 60 75 35 78 22 90 35 130 0 145M280 200L310 195 322 170 322 135 343 97 360 118 370 105 382 55 408 30 460 0M348 355L355 385 385 412 418 390 432 405 470 388 475 375 500 380 535 360 540 320 590 235 608 172 625 195 650 200 680 128 695 140 710 110 730 100 750 70 752 17 810 75 823 45 815 10M823 45L850 60 855 88 890 110 898 135 868 190 873 215 900 212 910 240 950 250 985 290 1020 290 1055 275 1100 270M890 110L900 100 913 118 898 135M627 0V65L665 45 700 5M32 0V80M382 517L377 558 360 562 343 597 310 597 283 622 275 605 245 630 237 655 215 655 180 690 135 698 120 715 117 738 90 745 88 785M-20 786H210L262 772 300 748 452 758 465 770 480 795V815L607 818 733 972M222 785L198 812 197 840 225 868 250 875 280 955 350 1035 355 1065 375 1090 403 1112 412 1175 435 1200 443 1258 470 1270M-5 1160L17 1205 20 1235 0 1260M0 1400L28 1480 225 1497"/>
      </g>
      <g id="labels" class="font-[Roboto,sans-serif]" stroke-linejoin="round"></g>

      <!-- Brewery marker at the right edge -->
      <g transform="translate(3140 350) scale(.408163 .333333)">
        <ellipse cx="1515" cy="918" rx="42" ry="28" fill="#77786c" opacity=".55"/>
        <path d="M1526 709C1490 709 1461 745 1461 790 1461 850 1505 880 1526 955 1547 880 1591 850 1591 790 1591 745 1562 709 1526 709z" fill="#66afcd" stroke="#4a93b3" stroke-width="1.5"/>
        <ellipse cx="1526" cy="790" rx="27" ry="33" fill="#fff"/>
      </g>
      <!-- Mapbox wordmark -->
      <g transform="translate(1310 860) scale(.395408 .333333)">
        <ellipse cx="116" cy="1407" rx="51" ry="62" fill="#6394af"/><ellipse cx="116" cy="1407" rx="45" ry="55" fill="#f4f9fc"/>
        <path d="M95 1431V1406Q97 1374 122 1374 145 1378 145 1402 142 1432 112 1434z" fill="#6394af"/>
        <path d="M122 1382l4 16 13 4-13 5-4 15-4-15-12-5 12-4z" fill="#fff"/>
        <text class="font-['Lato',sans-serif] font-black" x="182" y="1434" font-size="92" textLength="312" lengthAdjust="spacingAndGlyphs" fill="#f4f9fc" stroke="#6394af" stroke-width="13" stroke-linejoin="round" paint-order="stroke">mapbox</text>
      </g>
    </svg>
    </div>
    <div class="absolute top-[0.625rem] right-[0.625rem] flex w-[1.8125rem] flex-col rounded-[0.25rem] bg-white shadow-[0_0_0_0.125rem_rgba(0,0,0,0.1)]">
      <div class="flex h-[1.8125rem] items-center justify-center"><svg class="h-[0.75rem] w-[0.75rem]" viewBox="0 0 24 24"><path d="M12 2.5v19M2.5 12h19" stroke="#333" stroke-width="5" stroke-linecap="round"/></svg></div>
      <div class="flex h-[1.8125rem] items-center justify-center rounded-t-[0.5rem] border-t-[1.6px] border-[#ddd]"><svg class="h-[0.75rem] w-[0.75rem]" viewBox="0 0 24 24"><path d="M3 12h18" stroke="#333" stroke-width="5.4" stroke-linecap="round"/></svg></div>
      <div class="flex h-[1.8125rem] items-center justify-center border-t-[1.6px] border-[#ddd]"><svg class="h-[1.0625rem] w-[0.5rem]" viewBox="0 0 16 34"><path d="M8 0l7.5 15.500H.5z" fill="#333"/><path d="M8 34L.5 19h15z" fill="#ccc"/></svg></div>
    </div>
    <div class="absolute right-0 bottom-0 flex h-[1.25rem] items-center rounded-br-[0.375rem] bg-white/50 pr-[0.3rem] pl-[0.3rem] text-[0.75rem] leading-[1.25rem] whitespace-nowrap text-black/75">
      <span class="tracking-[0.45px] [-webkit-text-stroke:0.4px_rgba(0,0,0,0.6)]">© Mapbox © OpenStreetMap</span><span class="ml-[0.35rem] font-bold">Improve this map</span>
    </div>
  </section>

  <section class="mt-[2rem] grid w-[76rem] grid-cols-3 gap-[1.5rem] px-[0.75rem]">
    <article class="flex h-[21.69rem] flex-col rounded-t-[0.75rem] rounded-b-[0.25rem] bg-white text-[#454759] shadow-[0_0.5rem_1rem_-0.125rem_rgba(10,10,10,0.1),0_0_0_1px_rgba(10,10,10,0.02)] [&_strong]:text-[#2e333d]">
      <div class="flex grow flex-col gap-2 px-6 pt-[1.5rem]">
        <h2 class="mb-[0.28rem] text-[1.5rem] leading-[1.125] font-bold tracking-[0.1px] text-[#363636]">603 Brewery</h2>
        <p><strong>Type:</strong> micro</p><p><strong>City:</strong> Londonderry</p><p><strong>Country:</strong> United States</p><p><strong>Phone:</strong> 6036307745</p><p><strong>Website:</strong> <a class="text-[#6f69f8]">Visit</a></p>
      </div>
      <button class="box-content h-[3rem] rounded-b-[0.25rem] border-t-[1.6px] border-[#ededed] bg-[#ed7186] tracking-[0.4px] text-[#170b0d] [-webkit-text-stroke:0.45px_#170b0d]">Remove from Favourites</button>
    </article>
    <article class="flex h-[21.69rem] flex-col rounded-t-[0.75rem] rounded-b-[0.25rem] bg-white text-[#454759] shadow-[0_0.5rem_1rem_-0.125rem_rgba(10,10,10,0.1),0_0_0_1px_rgba(10,10,10,0.02)] [&_strong]:text-[#2e333d]">
      <div class="flex grow flex-col gap-2 px-6 pt-[1.5rem]">
        <h2 class="mb-[0.28rem] text-[1.5rem] leading-[1.125] font-bold tracking-[-0.25px] text-[#363636]">Flying Goose Brewpub</h2>
        <p><strong>Type:</strong> brewpub</p><p><strong>City:</strong> New London</p><p><strong>Country:</strong> United States</p><p><strong>Phone:</strong> 6035266899</p><p><strong>Website:</strong> <a class="text-[#6f69f8]">Visit</a></p>
      </div>
      <button class="box-content h-[3rem] rounded-b-[0.25rem] border-t-[1.6px] border-[#ededed] bg-[#ed7186] tracking-[0.4px] text-[#170b0d] [-webkit-text-stroke:0.45px_#170b0d]">Remove from Favourites</button>
    </article>
    <article class="flex h-[21.69rem] flex-col rounded-t-[0.75rem] rounded-b-[0.25rem] bg-white text-[#454759] shadow-[0_0.5rem_1rem_-0.125rem_rgba(10,10,10,0.1),0_0_0_1px_rgba(10,10,10,0.02)] [&_strong]:text-[#2e333d]">
      <div class="flex grow flex-col gap-2 pt-[1.5rem]">
        <h2 class="mb-[0.28rem] text-[1.5rem] leading-[1.125] font-bold text-[#363636]">From the Barrel Brewing<br>Company</h2>
        <p><strong>Type:</strong> micro</p><p><strong>City:</strong> Londonderry</p><p><strong>Country:</strong> United States</p><p><strong>Phone:</strong> 6033281896</p><p><strong>Website:</strong> <a class="text-[#6f69f8]">Visit</a></p>
      </div>
      <button class="box-content h-[3rem] rounded-b-[0.25rem] border-t-[1.6px] border-[#ededed] bg-[#ed7186] tracking-[0.4px] text-[#170b0d] [-webkit-text-stroke:0.45px_#170b0d]">Remove from Favourites</button>
    </article>
    <article class="flex h-[21.69rem] flex-col rounded-t-[0.75rem] rounded-b-[0.25rem] bg-white text-[#454759] shadow-[0_0.5rem_1rem_-0.125rem_rgba(10,10,10,0.1),0_0_0_1px_rgba(10,10,10,0.02)] [&_strong]:text-[#2e333d]">
      <div class="flex grow flex-col gap-2 pt-[1.5rem]">
        <h2 class="mb-[0.28rem] text-[1.5rem] leading-[1.125] font-bold tracking-[0.35px] text-[#363636]">Moonlight Meadery/Hidden<br>Moon Brewing</h2>
        <p><strong>Type:</strong> contract</p><p><strong>City:</strong> Londonderry</p><p><strong>Country:</strong> United States</p><p><strong>Phone:</strong> 6032162162</p><p><strong>Website:</strong> <a class="text-[#6f69f8]">Visit</a></p>
      </div>
    </article>
    <article class="flex h-[21.69rem] flex-col rounded-t-[0.75rem] rounded-b-[0.25rem] bg-white text-[#454759] shadow-[0_0.5rem_1rem_-0.125rem_rgba(10,10,10,0.1),0_0_0_1px_rgba(10,10,10,0.02)] [&_strong]:text-[#2e333d]">
      <div class="flex grow flex-col gap-2 pt-[1.5rem]">
        <h2 class="mb-[0.28rem] text-[1.5rem] leading-[1.125] font-bold text-[#363636]">Long Blue Cat Brewing</h2>
        <p><strong>Type:</strong> micro</p><p><strong>City:</strong> Londonderry</p><p><strong>Country:</strong> United States</p><p><strong>Phone:</strong> 6038188068</p><p><strong>Website:</strong> <a class="text-[#6f69f8]">Visit</a></p>
      </div>
    </article>
  </section>
</main>
<script>
// Map labels per tile: origin, x scale, [text, x, baseline, width] and city dots.
const tiles = [
 {o:[1310,350],k:.395408,
  s:[["Lewiston",852,219,206],["Helena",1448,184,161],["Eugene",170,678,173],["Boise",983,758,134],["Idaho Falls",1404,783,251],["Ogden",1462,1202,147],["Eureka",50,1280,164],["Reno",573,1505,121]],
  l:[["Portland",189,390,229]], b:[["ORE.",516,732,130],["IDAHO",1142,663,173],["NEV.",941,1461,128]],
  d:[[303,426],[953,249],[1527,216],[255,708],[1049,792],[1527,816],[1535,1233],[131,1311],[632,1539]]},
 {o:[1310,860],k:.395408,
  s:[["Bakersfield",585,690,280],["Ensenada",883,1266,239]],
  l:[["Sacramento",277,138,326],["San Francisco",-52,293,371],["Las Vegas",1040,553,265],["Los Angeles",655,906,321]],
  b:[["CALIF.",555,455,184],["UTAH",1505,74,146],["ARIZ.",1525,935,148],["B.C.",1092,1492,103]],
  d:[[440,174],[334,312],[1170,588],[723,723],[814,942],[1001,1299]]},
 {o:[1920,350],k:.395408,
  s:[["Billings",304,344,180],["Rapid City",886,672,230],["Cheyenne",697,1214,240]], l:[["Denver",704,1465,188]],
  b:[["MONTANA",178,138,280],["N.D.",1262,64,115],["S.D.",1298,573,112],["WYO.",433,825,142],["NEBR.",1292,1137,170]],
  u:[["United States",1360,1570,505]],
  d:[[392,375],[998,702],[816,1248],[796,1500]]},
 {o:[1920,860],k:.395408,
  s:[["Pueblo",760,198,162],["Santa Fe",581,636,212],["Amarillo",1058,720,203],["Lubbock",1060,989,198],["Tucson",22,1208,172]], l:[["Ciudad Juárez",432,1283,385]],
  b:[["COLO.",645,87,163],["KANS.",1434,203,171],["N.M.",621,917,123],["TEXAS",1420,1327,173]],
  d:[[840,228],[687,669],[1158,750],[1158,1017],[109,1239],[624,1317]]},
 {o:[2530,350],k:.395408,
  s:[["Fargo",133,126,133],["Duluth",657,150,155],["Rochester",581,683,232],["Sioux Falls",71,771,268],["Madison",948,860,205],["Davenport",795,1148,238],["Omaha",210,1195,173]], l:[["Minneapolis",267,510,324]],
  b:[["MINN.",414,284,167],["WIS.",945,601,124],["IOWA",506,1095,144],["ILL.",1012,1445,102],["IND.",1351,1487,115]],
  d:[[197,159],[733,180],[604,531],[695,714],[204,804],[1049,894],[912,1179],[295,1227]]},
 {o:[2530,860],k:.395408,
  s:[["Kansas City",466,146,282],["St. Louis",853,131,209],["Tulsa",223,558,132],["Memphis",988,740,228],["Huntsville",1258,798,232],["Birmingham",1020,1010,313],["Shreveport",419,1162,260],["Mobile",1127,1453,155],["Dothan",1428,1369,163],["Cincinnati",1490,50,241],["New Orleans",800,1553,225]], l:[["Dallas",213,1130,168]],
  b:[["MO.",634,261,98],["KY.",1480,375,84],["TENN.",1357,639,172],["OKLA.",31,653,165],["ARK.",636,788,130],["MISS.",935,1157,156],["ALA.",1284,1161,128],["LA.",672,1465,85]],
  d:[[452,84],[955,165],[288,591],[973,759],[1372,831],[1347,1029],[197,1149],[548,1194],[1203,1485],[1510,1401]]},
 {o:[3140,350],k:.408163,
  s:[["London",343,877,175],["Buffalo",708,992,171],["Cleveland",394,1163,231],["Toledo",2,1218,160],["Albany",1185,938,160],["Brookhaven",1226,1284,266],["Harrisburg",792,1377,248]],
  l:[["Ottawa",855,518,174],["Montréal",1172,393,220],["Toronto",653,762,199],["Detroit",41,1010,175],["Québec",1455,131,175]],
  b:[["MICH.",-10,558,153],["N.Y.",1022,971,107],["VT.",1340,727,77],["MASS.",1387,1050,150],["CONN.",1305,1178,152],["PA.",718,1277,87],["OHIO",203,1397,128],["N.J.",1148,1445,94],["N.H.",1458,793,100]],
  d:[[1286,429],[636,783],[431,909],[693,927],[230,1032],[379,1182],[173,1155],[1264,972],[1359,1314],[916,1407]]},
 {o:[3140,860],k:.408163,
  s:[["Virginia Beach",1030,536,346],["Jacksonville",226,1505,318]], l:[["Atlanta",93,970,182]],
  b:[["W.VA.",417,164,146],["MD.",877,35,88],["DEL.",1018,120,108],["VA.",682,350,84],["N.C.",584,710,108],["S.C.",417,983,104],["GA.",163,1241,88]],
  d:[[66,84],[1016,470],[78,993]]}
];
const kinds = {s:'font-size="62" fill="#26262b"', l:'font-size="70" fill="#1c1c20"', b:'font-size="59" font-weight="700" fill="#000" letter-spacing="5"', u:'font-size="94" font-weight="500" fill="#000"'};
let out = '';
for (const t of tiles) {
  const dots = t.d.map(([x, y]) => `M${x} ${y}h.1`).join('');
  out += `<g transform="translate(${t.o}) scale(${t.k} .333333)" stroke-linecap="round">`;
  for (const k in kinds) for (const [s, x, y, w] of t[k] || [])
    out += `<text x="${x}" y="${y}" textLength="${w}" lengthAdjust="spacingAndGlyphs" ${kinds[k]} stroke="#fff" stroke-opacity=".75" stroke-width="10" paint-order="stroke">${s}</text>`;
  out += `<path d="${dots}" stroke="#fff" stroke-opacity=".8" stroke-width="10"/><path d="${dots}" stroke="#000" stroke-width="6.6"/></g>`;
}
out += '<circle cx="3567.800" cy="497.700" r="7.500" fill="#fff" stroke="#000" stroke-width="2.500"/><circle cx="3567.800" cy="497.700" r="3.200" fill="#000"/>';
document.getElementById('labels').innerHTML = out;
</script>
</body>
</html>
